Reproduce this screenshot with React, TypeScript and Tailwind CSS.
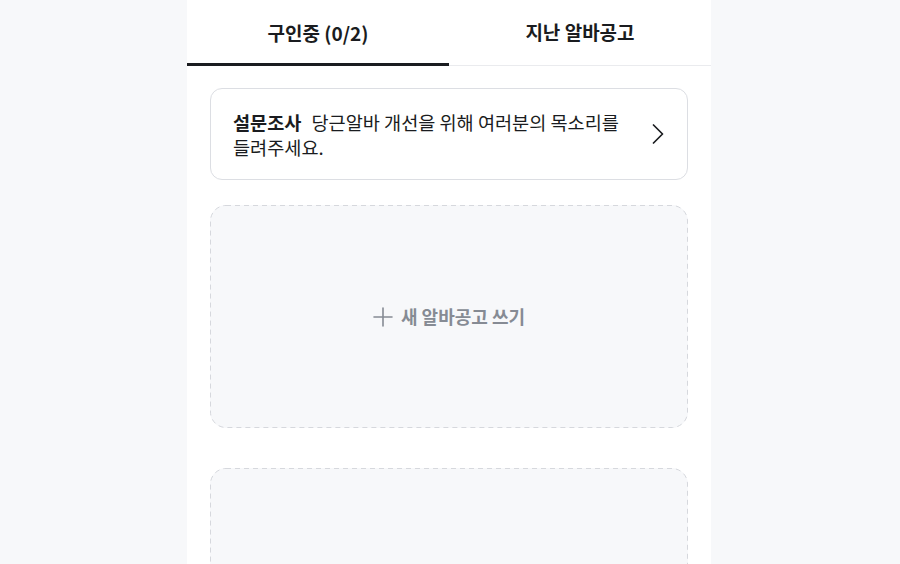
import React from "react";

function DashedCard({ children }: { children?: React.ReactNode }) {
  return (
    <div className="relative h-[223px] rounded-[16px] bg-[#f7f8fa] flex items-center justify-center">
      <svg className="absolute inset-0 w-full h-full pointer-events-none" preserveAspectRatio="none">
        <rect x="0.5" y="0.5" rx="15.5" ry="15.5" fill="none" stroke="#d6d8dd" strokeWidth="1" strokeDasharray="5 4" style={{ width: "calc(100% - 1px)", height: "calc(100% - 1px)" }} />
      </svg>
      {children}
    </div>
  );
}

export default function App() {
  return (
    <div
      className="min-h-[564px] w-full bg-[#f7f8fa] flex justify-center pr-[2px]"
      style={{ fontFamily: '"Noto Sans CJK KR", "Noto Sans", sans-serif' }}
    >
      <div className="w-[524px] bg-white min-h-[564px] flex flex-col">
        <div className="flex h-[66px] border-b border-[#eaebee]">
          <button className="flex-1 flex items-center justify-center text-[19px] font-bold text-[#1a1c20] border-b-[3px] border-[#1a1c20] -mb-px pt-[3px]">
            구인중 (0/2)
          </button>
          <button className="flex-1 flex items-center justify-center text-[19px] font-bold text-[#1a1c20]">
            지난 알바공고
          </button>
        </div>
        <div className="flex flex-col px-[23px] pt-[22px]">
          <div className="flex items-center justify-between rounded-[12px] border border-[#dcdee3] h-[92px] pl-[22px] pr-[23px]">
            <p className="text-[18.6px] leading-[25px] text-[#1a1c20] max-w-[395px]">
              <span className="font-bold">설문조사</span>
              <span className="ml-[10px]">당근알바 개선을 위해 여러분의 목소리를 들려주세요.</span>
            </p>
            <svg width="12" height="20" viewBox="0 0 12 20" fill="none" className="shrink-0">
              <path d="M1.5 1 L10.5 10 L1.5 19" stroke="#1a1c20" strokeWidth="1.7" strokeLinecap="round" strokeLinejoin="round" />
            </svg>
          </div>
          <div className="mt-[25px]">
            <DashedCard>
              <div className="flex items-center gap-[8px] text-[#868b94]">
                <svg width="20" height="20" viewBox="0 0 20 20" fill="none">
                  <path d="M10 1 V19 M1 10 H19" stroke="#868b94" strokeWidth="1.6" strokeLinecap="round" />
                </svg>
                <span className="text-[18px] font-semibold">새 알바공고 쓰기</span>
              </div>
            </DashedCard>
          </div>
          <div className="mt-[40px]">
            <DashedCard />
          </div>
        </div>
      </div>
    </div>
  );
}
